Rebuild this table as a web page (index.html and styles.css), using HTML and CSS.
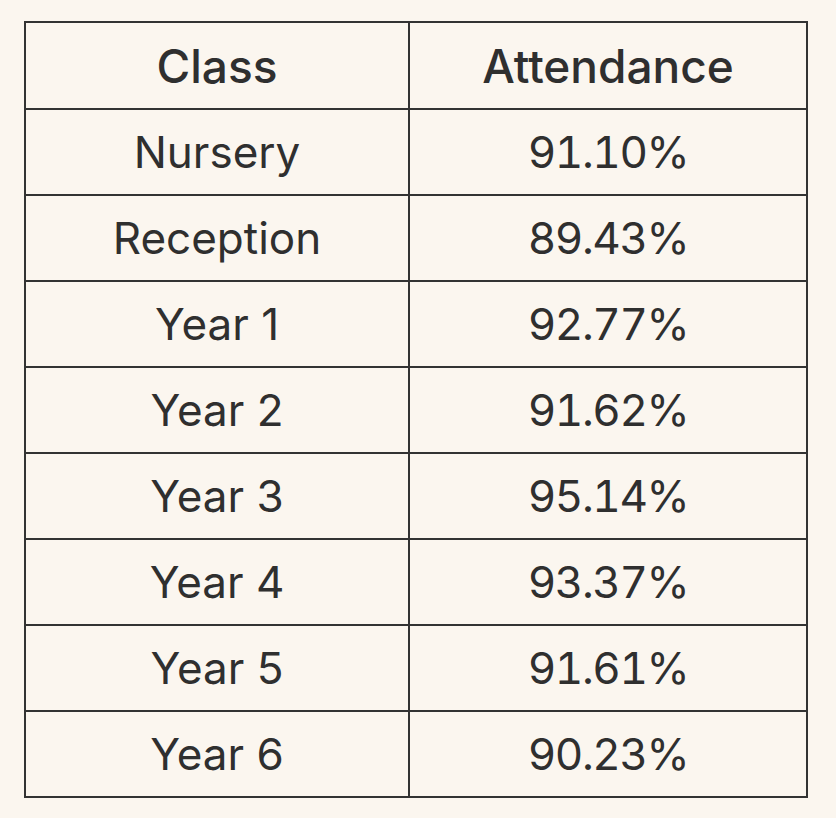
FILE: index.html
```html
<!DOCTYPE html>
<html lang="en">
<head>
<meta charset="utf-8">
<title>Attendance</title>
<link rel="stylesheet" href="styles.css">
</head>
<body>
<table class="attendance">
  <colgroup>
    <col class="col-class">
    <col class="col-att">
  </colgroup>
  <thead>
    <tr><th>Class</th><th>Attendance</th></tr>
  </thead>
  <tbody>
    <tr><td>Nursery</td><td class="num">91.10%</td></tr>
    <tr><td>Reception</td><td class="num">89.43%</td></tr>
    <tr><td>Year 1</td><td class="num">92.77%</td></tr>
    <tr><td>Year 2</td><td class="num">91.62%</td></tr>
    <tr><td>Year 3</td><td class="num">95.14%</td></tr>
    <tr><td>Year 4</td><td class="num">93.37%</td></tr>
    <tr><td>Year 5</td><td class="num">91.61%</td></tr>
    <tr><td>Year 6</td><td class="num">90.23%</td></tr>
  </tbody>
</table>
</body>
</html>
```

FILE: styles.css
```css
html, body {
  margin: 0;
  padding: 0;
  background: #fbf6ef;
}
body {
  padding: 21px 0 0 24px;
  font-family: Inter, "Liberation Sans", sans-serif;
  color: #2f2f2f;
}
.attendance {
  border-collapse: collapse;
  table-layout: fixed;
  width: 784px;
}
.col-class { width: 384px; }
.attendance th,
.attendance td {
  border: 2px solid #333;
  height: 84px;
  padding: 0;
  text-align: center;
  vertical-align: middle;
  font-size: 44px;
  line-height: 1;
}
.attendance th {
  height: 85px;
  font-size: 46px;
  font-weight: 500;
}
.attendance td {
  font-weight: 400;
}
.attendance td.num {
  font-variant-numeric: tabular-nums;
  letter-spacing: -1.4px;
}
```
